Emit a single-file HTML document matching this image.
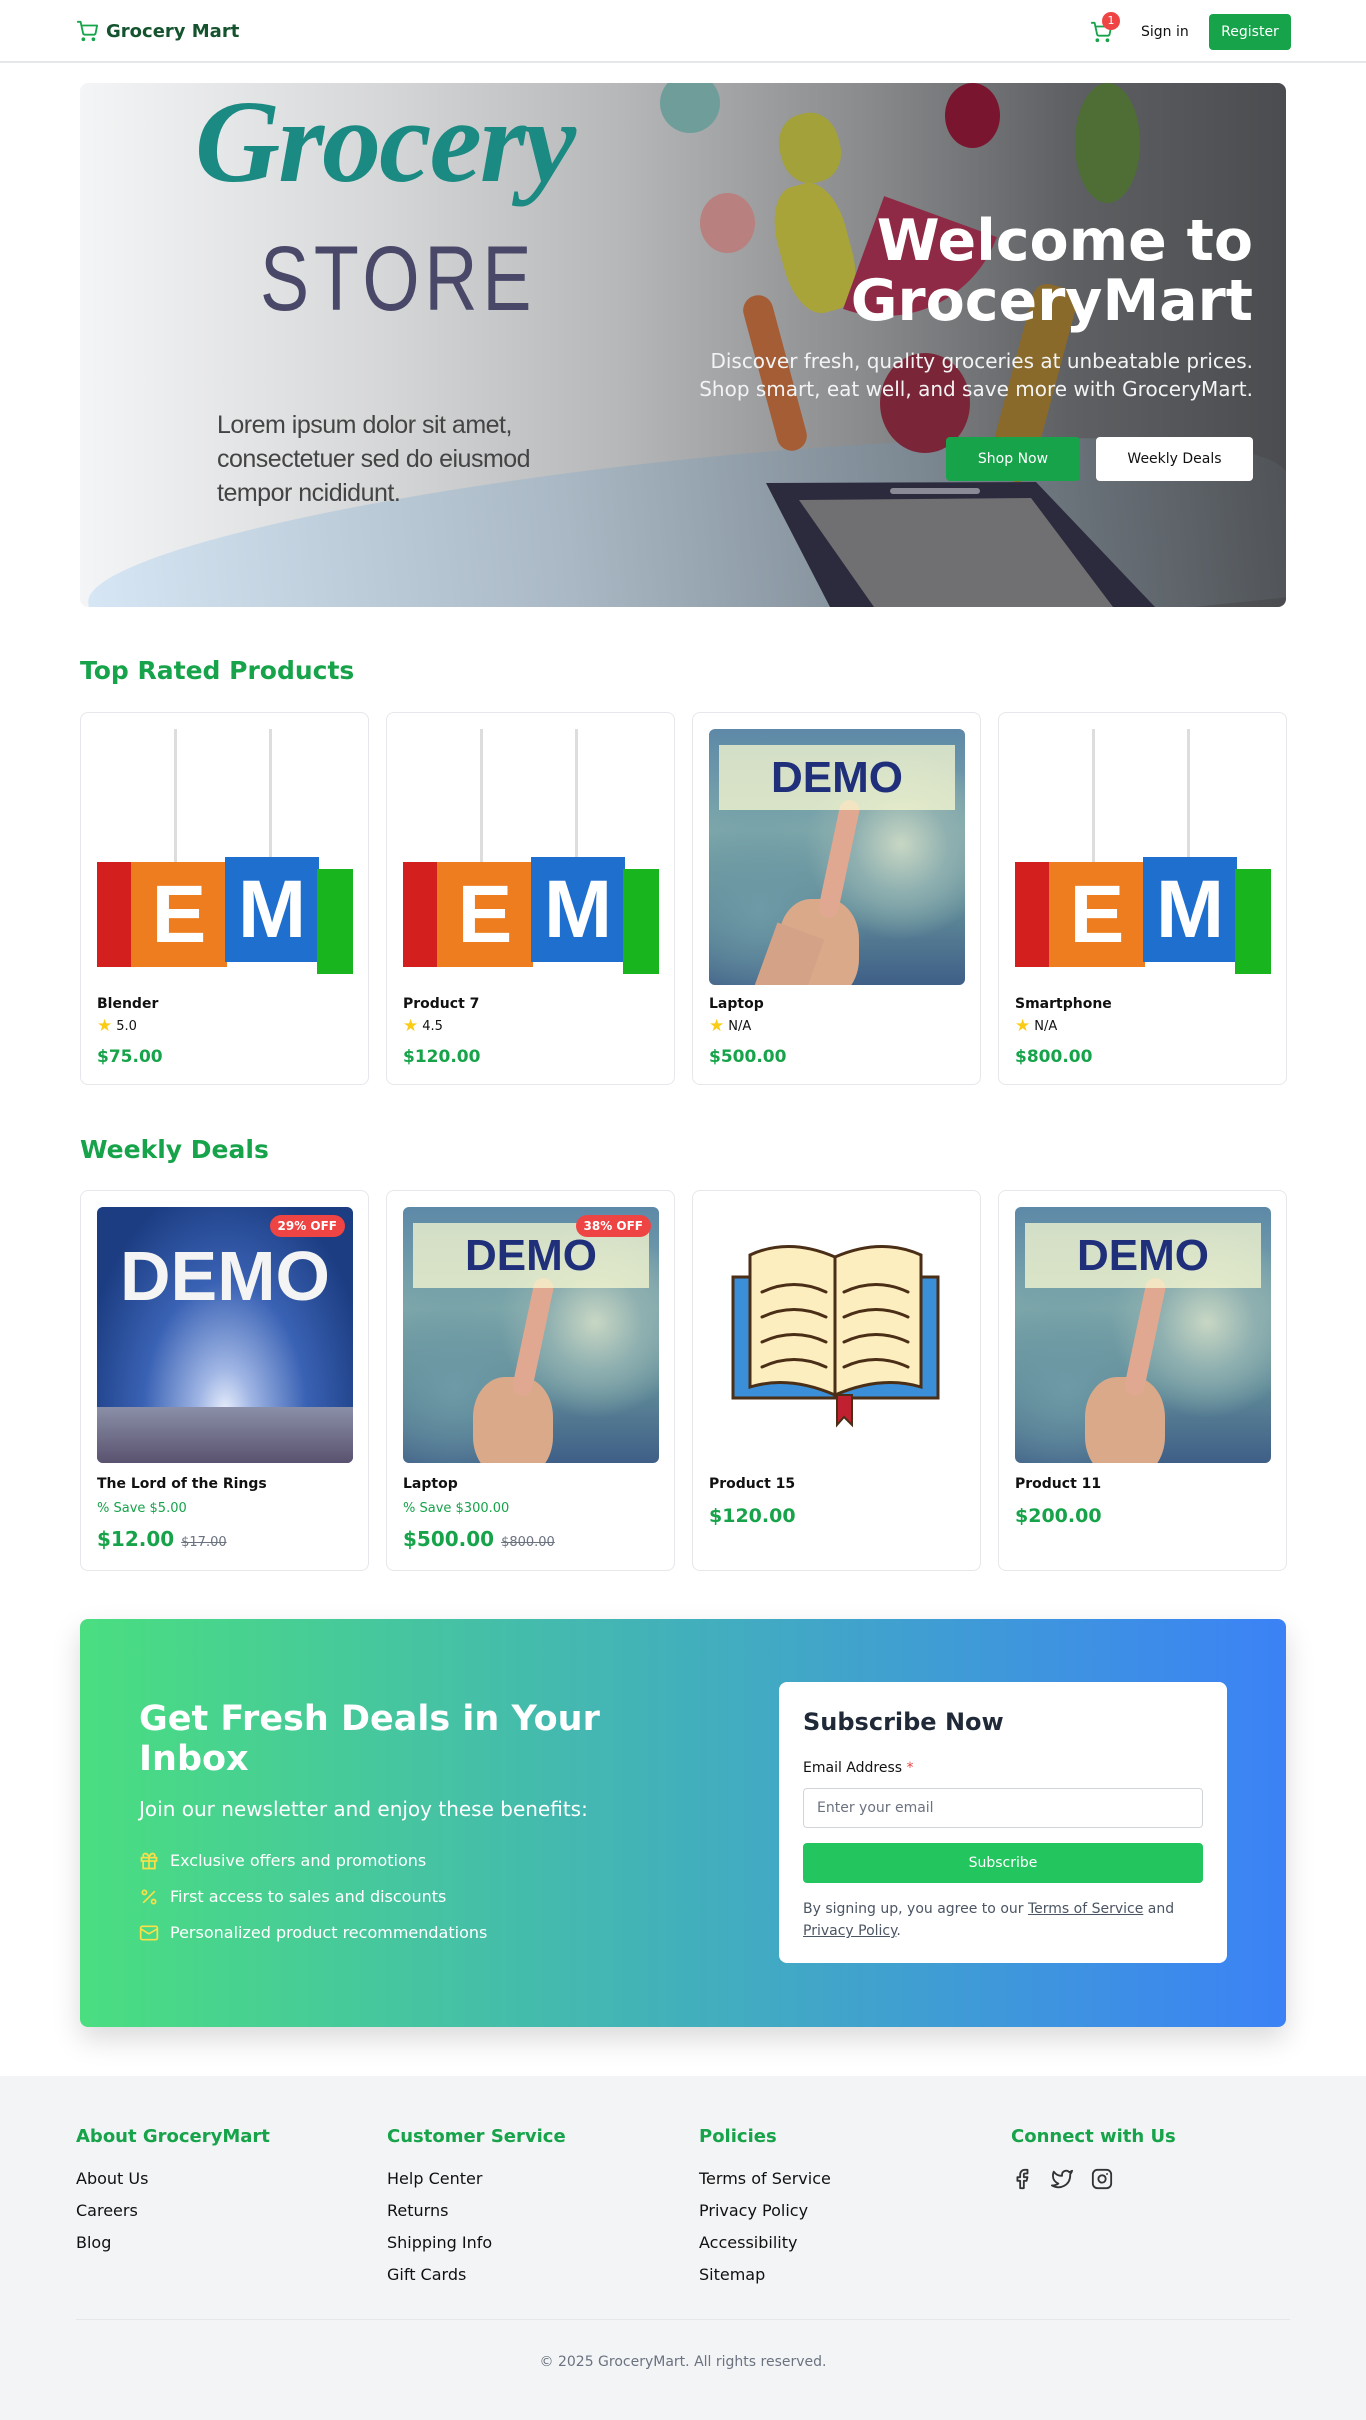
<!DOCTYPE html>
<html><head><meta charset="utf-8">
<style>
*{box-sizing:border-box;margin:0;padding:0}
body{width:1366px;height:2420px;font-family:"DejaVu Sans","Liberation Sans",sans-serif;background:#fff;color:#111;position:relative;overflow:hidden}
.abs{position:absolute}
.nav{position:absolute;left:0;top:0;width:1366px;height:63px;border-bottom:2px solid #e5e7eb;background:#fff}
.logo{position:absolute;left:76px;top:20px;display:flex;align-items:center;gap:8px;font-weight:bold;font-size:18px;color:#14532d}
.reg{position:absolute;left:1209px;top:14px;width:82px;height:36px;background:#16a34a;color:#fff;border-radius:4px;font-size:14px;text-align:center;line-height:36px}
.hero{position:absolute;left:80px;top:83px;width:1206px;height:524px;border-radius:8px;overflow:hidden;background:linear-gradient(90deg,#f4f5f6 0%,#d6d7d8 25%,#b6b7b8 45%,#8a8b8d 65%,#5e6063 82%,#4b4c4f 100%)}
h2.sec{position:absolute;left:80px;font-size:25px;font-weight:bold;color:#16a34a}
.card{position:absolute;width:289px;border:1px solid #e5e7eb;border-radius:8px;background:#fff}
.img{position:absolute;left:16px;top:16px;width:256px;height:256px;border-radius:6px;overflow:hidden}
.nm{position:absolute;left:16px;font-size:14px;font-weight:bold;color:#111}
.rt{position:absolute;left:16px;font-size:13px;color:#111;display:flex;align-items:center;gap:4px}
.rt span{font-size:17px;line-height:1}
.pr{position:absolute;left:16px;font-size:17px;font-weight:bold;color:#16a34a}
.badge{position:absolute;right:8px;top:8px;background:#ef4444;color:#fff;font-size:12px;font-weight:bold;border-radius:12px;padding:4px 8px}
.tag{position:absolute;top:133px;height:105px;color:#fff;font-weight:bold;font-size:82px;text-align:center;line-height:105px;font-family:"Liberation Sans",sans-serif}
.hand{background:radial-gradient(circle at 75% 45%,#c8d7c4 0,#8fb0b0 20%,transparent 40%),radial-gradient(circle at 20% 70%,#6d9aa6 0,transparent 40%),linear-gradient(180deg,#5d89a8 0%,#7ea8aa 40%,#5f8a98 70%,#3f5f87 100%)}
.band{position:absolute;left:10px;top:16px;width:236px;height:65px;background:rgba(250,250,210,.75);text-align:center;font:bold 44px/65px "Liberation Sans",sans-serif;color:#1f2f7a}
.foot{position:absolute;left:0;top:2076px;width:1366px;height:344px;background:#f3f4f6}
.fh{position:absolute;top:2126px;font-size:18px;font-weight:bold;color:#16a34a}
.fl{position:absolute;font-size:16px;color:#111}
</style></head><body>

<div class="nav">
 <div class="logo"><svg width="22" height="22" viewBox="0 0 24 24" fill="none" stroke="#16a34a" stroke-width="2" stroke-linecap="round" stroke-linejoin="round"><circle cx="8" cy="21" r="1"/><circle cx="19" cy="21" r="1"/><path d="M2 2h3l2.7 12.4a2 2 0 0 0 2 1.6h9.7a2 2 0 0 0 2-1.6L23 6H6"/></svg>Grocery Mart</div>
 <svg class="abs" style="left:1090px;top:21px" width="22" height="22" viewBox="0 0 24 24" fill="none" stroke="#16a34a" stroke-width="2" stroke-linecap="round" stroke-linejoin="round"><circle cx="8" cy="21" r="1"/><circle cx="19" cy="21" r="1"/><path d="M2 2h3l2.7 12.4a2 2 0 0 0 2 1.6h9.7a2 2 0 0 0 2-1.6L23 6H6"/></svg>
 <div class="abs" style="left:1102px;top:12px;width:18px;height:18px;border-radius:9px;background:#ef4444;color:#fff;font-size:11px;text-align:center;line-height:18px">1</div>
 <div class="abs" style="left:1141px;top:24px;font-size:14px;color:#111">Sign in</div>
 <div class="reg">Register</div>
</div>

<div class="hero">
 <div class="abs" style="left:0;top:440px;width:1206px;height:200px;border-radius:50% 50% 0 0/40% 40% 0 0;background:linear-gradient(90deg,#d6e6f4,#a9b8c4 40%,#7b8791 70%,#505357);transform:rotate(-6deg);transform-origin:0 0"></div>
 <div class="abs" style="left:115px;top:0px;font:italic bold 118px/1 'Liberation Serif',serif;color:#1a8a82;letter-spacing:-2px">Grocery</div>
 <div class="abs" style="left:180px;top:150px;font:92px/1 'Liberation Sans',sans-serif;color:#4a4868;letter-spacing:6px;transform:scaleX(.8);transform-origin:0 0">STORE</div>
 <div class="abs" style="left:137px;top:325px;font:25px/34px 'Liberation Sans',sans-serif;color:#444;letter-spacing:-.5px">Lorem ipsum dolor sit amet,<br>consectetuer sed do eiusmod<br>tempor ncididunt.</div>
 <div class="abs" style="left:620px;top:110px;width:55px;height:60px;border-radius:50%;background:#b98080"></div>
 <div class="abs" style="left:700px;top:30px;width:60px;height:70px;border-radius:45%;background:#a2a13a;transform:rotate(-15deg)"></div>
 <div class="abs" style="left:580px;top:-10px;width:60px;height:60px;border-radius:50%;background:#6f9e9a"></div>
 <div class="abs" style="left:865px;top:0px;width:55px;height:65px;border-radius:50%;background:#7a1530"></div>
 <div class="abs" style="left:995px;top:0px;width:65px;height:120px;border-radius:50%;background:#4e6e36"></div>
 <div class="abs" style="left:700px;top:100px;width:70px;height:130px;border-radius:40%;background:#a9a43a;transform:rotate(-15deg)"></div>
 <div class="abs" style="left:780px;top:130px;width:120px;height:120px;border-radius:0 0 120px 0;background:#8e2a45;transform:rotate(20deg)"></div>
 <div class="abs" style="left:800px;top:270px;width:90px;height:100px;border-radius:50%;background:#7b2638"></div>
 <div class="abs" style="left:680px;top:210px;width:30px;height:160px;border-radius:15px;background:#a45d35;transform:rotate(-15deg)"></div>
 <div class="abs" style="left:930px;top:200px;width:45px;height:200px;border-radius:15px;background:#8a6a2a;transform:rotate(15deg)"></div>
 <svg class="abs" style="left:0;top:0" width="1206" height="524"><polygon points="686,400 956,399 1075,524 750,524" fill="#2c2b3d"/><polygon points="719,417 951,415 1033,524 794,524" fill="#707072"/><rect x="810" y="405" width="90" height="6" rx="3" fill="#8a8a96"/></svg>
 <div class="abs" style="right:33px;top:128px;text-align:right;color:#fff;font-weight:bold;font-size:57px;line-height:60px">Welcome to<br>GroceryMart</div>
 <div class="abs" style="right:33px;top:264px;text-align:right;color:#f3f3f3;font-size:20px;line-height:28px">Discover fresh, quality groceries at unbeatable prices.<br>Shop smart, eat well, and save more with GroceryMart.</div>
 <div class="abs" style="left:866px;top:354px;width:134px;height:44px;background:#16a34a;color:#fff;border-radius:4px;font-size:14px;text-align:center;line-height:44px">Shop Now</div>
 <div class="abs" style="left:1016px;top:354px;width:157px;height:44px;background:#fff;color:#111;border-radius:4px;font-size:14px;text-align:center;line-height:44px">Weekly Deals</div>
</div>

<h2 class="sec" style="top:656px">Top Rated Products</h2>

<div class="card" style="left:80px;top:712px;height:373px">
 <div class="img" style="background:#fff"><div class="abs" style="left:77px;top:0;width:3px;height:140px;background:#ddd"></div><div class="abs" style="left:172px;top:0;width:3px;height:140px;background:#ddd"></div><div class="tag" style="left:0;width:38px;background:#d41f1f"></div><div class="tag" style="left:34px;width:96px;background:#ee7d1f">E</div><div class="tag" style="left:128px;width:94px;background:#1f6fcf;top:128px">M</div><div class="tag" style="left:220px;width:36px;background:#19b51f;top:140px"></div></div>
 <div class="nm" style="top:283px">Blender</div><div class="rt" style="top:305px"><span style="color:#facc15">★</span>5.0</div><div class="pr" style="top:334px">$75.00</div>
</div>
<div class="card" style="left:386px;top:712px;height:373px">
 <div class="img" style="background:#fff"><div class="abs" style="left:77px;top:0;width:3px;height:140px;background:#ddd"></div><div class="abs" style="left:172px;top:0;width:3px;height:140px;background:#ddd"></div><div class="tag" style="left:0;width:38px;background:#d41f1f"></div><div class="tag" style="left:34px;width:96px;background:#ee7d1f">E</div><div class="tag" style="left:128px;width:94px;background:#1f6fcf;top:128px">M</div><div class="tag" style="left:220px;width:36px;background:#19b51f;top:140px"></div></div>
 <div class="nm" style="top:283px">Product 7</div><div class="rt" style="top:305px"><span style="color:#facc15">★</span>4.5</div><div class="pr" style="top:334px">$120.00</div>
</div>
<div class="card" style="left:692px;top:712px;height:373px">
 <div class="img hand"><div class="abs" style="left:70px;top:170px;width:80px;height:100px;border-radius:40%;background:#d9a98a"></div><div class="abs" style="left:120px;top:70px;width:20px;height:120px;border-radius:10px;background:#e0a890;transform:rotate(12deg)"></div><div class="abs" style="left:55px;top:200px;width:50px;height:70px;background:#d4a287;transform:rotate(20deg)"></div><div class="band">DEMO</div></div>
 <div class="nm" style="top:283px">Laptop</div><div class="rt" style="top:305px"><span style="color:#facc15">★</span>N/A</div><div class="pr" style="top:334px">$500.00</div>
</div>
<div class="card" style="left:998px;top:712px;height:373px">
 <div class="img" style="background:#fff"><div class="abs" style="left:77px;top:0;width:3px;height:140px;background:#ddd"></div><div class="abs" style="left:172px;top:0;width:3px;height:140px;background:#ddd"></div><div class="tag" style="left:0;width:38px;background:#d41f1f"></div><div class="tag" style="left:34px;width:96px;background:#ee7d1f">E</div><div class="tag" style="left:128px;width:94px;background:#1f6fcf;top:128px">M</div><div class="tag" style="left:220px;width:36px;background:#19b51f;top:140px"></div></div>
 <div class="nm" style="top:283px">Smartphone</div><div class="rt" style="top:305px"><span style="color:#facc15">★</span>N/A</div><div class="pr" style="top:334px">$800.00</div>
</div>

<h2 class="sec" style="top:1135px">Weekly Deals</h2>

<div class="card" style="left:80px;top:1190px;height:381px">
 <div class="img" style="background:radial-gradient(ellipse at 50% 80%,#e8eefc 0,#9fb5e4 15%,#3a62b4 45%,#1c3d82 80%)"><div class="abs" style="left:0;top:34px;width:256px;text-align:center;font:bold 70px/1 'Liberation Sans',sans-serif;color:#f4f4f4">DEMO</div><div class="abs" style="left:0;top:200px;width:256px;height:56px;background:linear-gradient(#8a8fa8,#5a5270)"></div><div class="badge">29% OFF</div></div>
 <div class="nm" style="top:285px">The Lord of the Rings</div><div class="rt" style="top:310px;color:#16a34a">% Save $5.00</div><div class="pr" style="top:336px;font-size:20px">$12.00 <span style="font-size:13px;color:#6b7280;font-weight:normal;text-decoration:line-through">$17.00</span></div>
</div>
<div class="card" style="left:386px;top:1190px;height:381px">
 <div class="img hand"><div class="abs" style="left:70px;top:170px;width:80px;height:100px;border-radius:40%;background:#d9a98a"></div><div class="abs" style="left:120px;top:70px;width:20px;height:120px;border-radius:10px;background:#e0a890;transform:rotate(12deg)"></div><div class="band">DEMO</div><div class="badge">38% OFF</div></div>
 <div class="nm" style="top:285px">Laptop</div><div class="rt" style="top:310px;color:#16a34a">% Save $300.00</div><div class="pr" style="top:336px;font-size:20px">$500.00 <span style="font-size:13px;color:#6b7280;font-weight:normal;text-decoration:line-through">$800.00</span></div>
</div>
<div class="card" style="left:692px;top:1190px;height:381px">
 <div class="img" style="background:#fff"><svg width="256" height="256" viewBox="0 0 256 256"><rect x="24" y="70" width="205" height="121" fill="#3a8fd8" stroke="#4a2e16" stroke-width="3"/><path d="M41 48 Q80 30 126 50 L126 188 Q80 168 41 180 Z" fill="#fdeec0" stroke="#4a2e16" stroke-width="3"/><path d="M126 50 Q172 30 212 48 L212 180 Q172 168 126 188 Z" fill="#fdeec0" stroke="#4a2e16" stroke-width="3"/><g stroke="#4a2e16" stroke-width="3" fill="none" stroke-linecap="round"><path d="M53 85 Q85 70 117 85M53 110 Q85 95 117 110M53 135 Q85 120 117 135M53 160 Q85 145 117 160M135 85 Q167 70 199 85M135 110 Q167 95 199 110M135 135 Q167 120 199 135M135 160 Q167 145 199 160"/></g><path d="M128 188 L128 218 L135 210 L143 218 L143 188 Z" fill="#c0202f" stroke="#4a2e16" stroke-width="2"/></svg></div>
 <div class="nm" style="top:285px">Product 15</div><div class="pr" style="top:314px;font-size:19px">$120.00</div>
</div>
<div class="card" style="left:998px;top:1190px;height:381px">
 <div class="img hand"><div class="abs" style="left:70px;top:170px;width:80px;height:100px;border-radius:40%;background:#d9a98a"></div><div class="abs" style="left:120px;top:70px;width:20px;height:120px;border-radius:10px;background:#e0a890;transform:rotate(12deg)"></div><div class="band">DEMO</div></div>
 <div class="nm" style="top:285px">Product 11</div><div class="pr" style="top:314px;font-size:19px">$200.00</div>
</div>

<div class="abs" style="left:80px;top:1619px;width:1206px;height:408px;border-radius:8px;background:linear-gradient(90deg,#4ade80,#3b82f6);box-shadow:0 12px 28px rgba(0,0,0,.15)">
 <div class="abs" style="left:59px;top:80px;color:#fff;font-weight:bold;font-size:35px;line-height:40px">Get Fresh Deals in Your<br>Inbox</div>
 <div class="abs" style="left:59px;top:178px;color:#fff;font-size:20px">Join our newsletter and enjoy these benefits:</div>
 <div class="abs" style="left:59px;top:224px;color:#fff;font-size:16px;line-height:36px">
  <div style="display:flex;align-items:center;gap:11px"><svg width="20" height="20" viewBox="0 0 24 24" fill="none" stroke="#fde047" stroke-width="2"><rect x="3" y="8" width="18" height="4"/><path d="M12 8v13M19 12v9H5v-9M7.5 8a2.5 2.5 0 0 1 0-5C11 3 12 8 12 8s1-5 4.5-5a2.5 2.5 0 0 1 0 5"/></svg>Exclusive offers and promotions</div>
  <div style="display:flex;align-items:center;gap:11px"><svg width="20" height="20" viewBox="0 0 24 24" fill="none" stroke="#fde047" stroke-width="2"><path d="M19 5L5 19"/><circle cx="6.5" cy="6.5" r="2.5"/><circle cx="17.5" cy="17.5" r="2.5"/></svg>First access to sales and discounts</div>
  <div style="display:flex;align-items:center;gap:11px"><svg width="20" height="20" viewBox="0 0 24 24" fill="none" stroke="#fde047" stroke-width="2"><rect x="2" y="4" width="20" height="16" rx="2"/><path d="M22 7l-10 6L2 7"/></svg>Personalized product recommendations</div>
 </div>
 <div class="abs" style="left:699px;top:63px;width:448px;height:281px;background:#fff;border-radius:8px">
  <div class="abs" style="left:24px;top:26px;font-size:24px;font-weight:bold;color:#1f2937">Subscribe Now</div>
  <div class="abs" style="left:24px;top:78px;font-size:14px;color:#111">Email Address <span style="color:#ef4444">*</span></div>
  <div class="abs" style="left:24px;top:106px;width:400px;height:40px;border:1px solid #d1d5db;border-radius:4px;font-size:14px;color:#6b7280;padding:11px 13px">Enter your email</div>
  <div class="abs" style="left:24px;top:161px;width:400px;height:40px;background:#22c55e;border-radius:4px;color:#fff;font-size:14px;text-align:center;line-height:40px">Subscribe</div>
  <div class="abs" style="left:24px;top:216px;width:400px;font-size:14px;line-height:22px;color:#4b5563">By signing up, you agree to our <u>Terms of Service</u> and <u>Privacy Policy</u>.</div>
 </div>
</div>

<div class="foot"></div>
<div class="fh" style="left:76px">About GroceryMart</div>
<div class="fh" style="left:387px">Customer Service</div>
<div class="fh" style="left:699px">Policies</div>
<div class="fh" style="left:1011px">Connect with Us</div>
<div class="fl" style="left:76px;top:2169px">About Us</div>
<div class="fl" style="left:76px;top:2201px">Careers</div>
<div class="fl" style="left:76px;top:2233px">Blog</div>
<div class="fl" style="left:387px;top:2169px">Help Center</div>
<div class="fl" style="left:387px;top:2201px">Returns</div>
<div class="fl" style="left:387px;top:2233px">Shipping Info</div>
<div class="fl" style="left:387px;top:2265px">Gift Cards</div>
<div class="fl" style="left:699px;top:2169px">Terms of Service</div>
<div class="fl" style="left:699px;top:2201px">Privacy Policy</div>
<div class="fl" style="left:699px;top:2233px">Accessibility</div>
<div class="fl" style="left:699px;top:2265px">Sitemap</div>
<svg class="abs" style="left:1011px;top:2168px" width="22" height="22" viewBox="0 0 24 24" fill="none" stroke="#333" stroke-width="2" stroke-linecap="round" stroke-linejoin="round"><path d="M18 2h-3a5 5 0 0 0-5 5v3H7v4h3v8h4v-8h3l1-4h-4V7a1 1 0 0 1 1-1h3z"/></svg>
<svg class="abs" style="left:1051px;top:2168px" width="22" height="22" viewBox="0 0 24 24" fill="none" stroke="#333" stroke-width="2" stroke-linecap="round" stroke-linejoin="round"><path d="M23 3a10.9 10.9 0 0 1-3.14 1.53 4.48 4.48 0 0 0-7.86 3v1A10.66 10.66 0 0 1 3 4s-4 9 5 13a11.64 11.64 0 0 1-7 2c9 5 20 0 20-11.5a4.5 4.5 0 0 0-.08-.83A7.72 7.72 0 0 0 23 3z"/></svg>
<svg class="abs" style="left:1091px;top:2168px" width="22" height="22" viewBox="0 0 24 24" fill="none" stroke="#333" stroke-width="2" stroke-linecap="round" stroke-linejoin="round"><rect x="2" y="2" width="20" height="20" rx="5"/><path d="M16 11.37A4 4 0 1 1 12.63 8 4 4 0 0 1 16 11.37z"/><path d="M17.5 6.5h.01"/></svg>
<div class="abs" style="left:76px;top:2319px;width:1214px;height:1px;background:#e5e7eb"></div>
<div class="abs" style="left:0;top:2354px;width:1366px;text-align:center;font-size:14px;color:#6b7280">© 2025 GroceryMart. All rights reserved.</div>
</body></html>
